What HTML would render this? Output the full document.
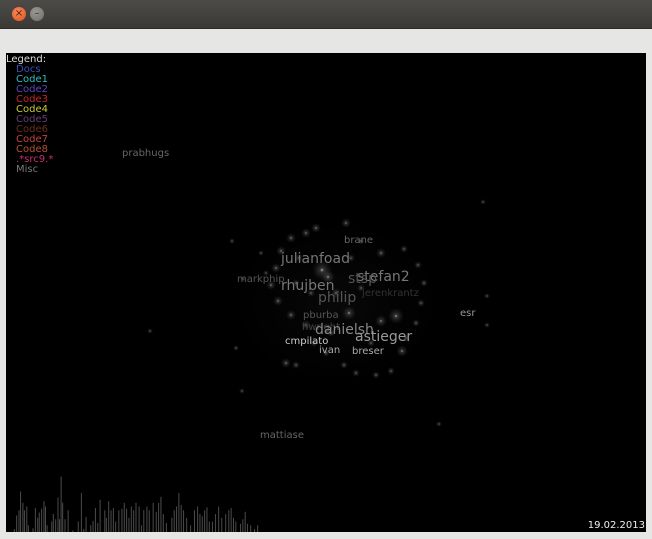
<!DOCTYPE html>
<html><head><meta charset="utf-8"><style>
html,body{margin:0;padding:0;width:652px;height:539px;overflow:hidden;background:#e6e6e4;font-family:"DejaVu Sans","Liberation Sans",sans-serif}
.title{position:absolute;left:0;top:0;width:652px;height:28px;background:linear-gradient(#4c4b47,#3a3936);border-bottom:1px solid #2a2a28}
.btn{position:absolute;top:7px;width:14px;height:14px;border-radius:50%;font-size:10px;line-height:14px;text-align:center}
.c{position:absolute;left:6px;top:53px;width:640px;height:479px;background:#000;overflow:hidden}
.t{position:absolute;white-space:nowrap;font-size:10px;line-height:10px}
</style></head><body>
<div class="title">
<div class="btn" style="left:12px;background:radial-gradient(circle at 40% 35%,#f88a5a,#e0501e);color:#4a1a08">×</div>
<div class="btn" style="left:30px;background:radial-gradient(circle at 40% 35%,#9a9994,#6e6d69);color:#333">–</div>
</div>
<div class="c">
<svg width="640" height="479" style="position:absolute;left:0;top:0">
<defs><radialGradient id="g"><stop offset="0" stop-color="#fff" stop-opacity=".7"/><stop offset=".2" stop-color="#bbb" stop-opacity=".25"/><stop offset="1" stop-color="#666" stop-opacity="0"/></radialGradient>
<radialGradient id="h"><stop offset="0" stop-color="#666" stop-opacity=".25"/><stop offset="1" stop-color="#333" stop-opacity="0"/></radialGradient></defs>
<ellipse cx="330" cy="250" rx="110" ry="85" fill="url(#h)" opacity=".35"/>
<g fill="url(#g)">
<circle cx="316" cy="217" r="10"/><circle cx="322" cy="224" r="7"/><circle cx="343" cy="260" r="7"/><circle cx="390" cy="263" r="8"/><circle cx="396" cy="298" r="6"/><circle cx="375" cy="268" r="6"/>
<circle cx="300" cy="180" r="5"/><circle cx="310" cy="175" r="5"/><circle cx="285" cy="185" r="5"/><circle cx="275" cy="198" r="5"/><circle cx="270" cy="215" r="5"/><circle cx="265" cy="232" r="5"/><circle cx="272" cy="248" r="5"/><circle cx="285" cy="262" r="5"/><circle cx="300" cy="272" r="5"/><circle cx="280" cy="310" r="5"/><circle cx="290" cy="312" r="4"/>
<circle cx="340" cy="170" r="5"/><circle cx="355" cy="188" r="4"/><circle cx="375" cy="200" r="5"/><circle cx="398" cy="196" r="4"/><circle cx="412" cy="212" r="4"/><circle cx="418" cy="230" r="4"/><circle cx="415" cy="250" r="4"/><circle cx="410" cy="270" r="4"/><circle cx="400" cy="285" r="4"/><circle cx="385" cy="318" r="4"/><circle cx="370" cy="322" r="4"/><circle cx="350" cy="320" r="4"/><circle cx="338" cy="312" r="4"/><circle cx="320" cy="300" r="4"/><circle cx="308" cy="290" r="4"/>
<circle cx="293" cy="205" r="4"/><circle cx="330" cy="240" r="5"/><circle cx="355" cy="235" r="4"/><circle cx="345" cy="205" r="4"/><circle cx="305" cy="240" r="4"/><circle cx="290" cy="230" r="4"/><circle cx="365" cy="290" r="4"/><circle cx="325" cy="280" r="4"/><circle cx="255" cy="200" r="3"/><circle cx="260" cy="220" r="3"/>
<circle cx="477" cy="149" r="3"/><circle cx="481" cy="243" r="3"/><circle cx="481" cy="272" r="3"/><circle cx="433" cy="371" r="3"/><circle cx="226" cy="188" r="3"/><circle cx="144" cy="278" r="3"/><circle cx="230" cy="295" r="3"/><circle cx="236" cy="338" r="3"/><circle cx="237" cy="226" r="3"/>
</g>
<g fill="#4a4a4a" transform="translate(0,479) scale(0.78,0.75) translate(0,-479)">
<rect x="10" y="475" width="1.3" height="4"/><rect x="13" y="457" width="1.3" height="22"/><rect x="16" y="450" width="1.3" height="29"/><rect x="18" y="425" width="1.3" height="54"/><rect x="21" y="440" width="1.3" height="39"/><rect x="23" y="450" width="1.3" height="29"/><rect x="26" y="445" width="1.3" height="34"/><rect x="28" y="470" width="1.3" height="9"/><rect x="34" y="474" width="1.3" height="5"/><rect x="37" y="447" width="1.3" height="32"/><rect x="40" y="460" width="1.3" height="19"/><rect x="42" y="453" width="1.3" height="26"/><rect x="45" y="448" width="1.3" height="31"/><rect x="48" y="438" width="1.3" height="41"/><rect x="50" y="445" width="1.3" height="34"/><rect x="52" y="470" width="1.3" height="9"/><rect x="58" y="465" width="1.3" height="14"/><rect x="60" y="455" width="1.3" height="24"/><rect x="63" y="462" width="1.3" height="17"/><rect x="66" y="433" width="1.3" height="46"/><rect x="68" y="462" width="1.3" height="17"/><rect x="70" y="405" width="1.3" height="74"/><rect x="72" y="440" width="1.3" height="39"/><rect x="75" y="462" width="1.3" height="17"/><rect x="79" y="450" width="1.3" height="29"/><rect x="85" y="477" width="1.3" height="2"/><rect x="92" y="465" width="1.3" height="14"/><rect x="96" y="427" width="1.3" height="52"/><rect x="99" y="475" width="1.3" height="4"/><rect x="102" y="459" width="1.3" height="20"/><rect x="108" y="470" width="1.3" height="9"/><rect x="111" y="464" width="1.3" height="15"/><rect x="114" y="447" width="1.3" height="32"/><rect x="117" y="467" width="1.3" height="12"/><rect x="120" y="436" width="1.3" height="43"/><rect x="126" y="450" width="1.3" height="29"/><rect x="128" y="460" width="1.3" height="19"/><rect x="131" y="438" width="1.3" height="41"/><rect x="134" y="450" width="1.3" height="29"/><rect x="137" y="447" width="1.3" height="32"/><rect x="140" y="465" width="1.3" height="14"/><rect x="144" y="450" width="1.3" height="29"/><rect x="148" y="448" width="1.3" height="31"/><rect x="151" y="440" width="1.3" height="39"/><rect x="154" y="448" width="1.3" height="31"/><rect x="157" y="460" width="1.3" height="19"/><rect x="160" y="445" width="1.3" height="34"/><rect x="163" y="450" width="1.3" height="29"/><rect x="166" y="440" width="1.3" height="39"/><rect x="170" y="445" width="1.3" height="34"/><rect x="173" y="470" width="1.3" height="9"/><rect x="176" y="450" width="1.3" height="29"/><rect x="180" y="445" width="1.3" height="34"/><rect x="183" y="450" width="1.3" height="29"/><rect x="188" y="440" width="1.3" height="39"/><rect x="192" y="452" width="1.3" height="27"/><rect x="195" y="440" width="1.3" height="39"/><rect x="198" y="432" width="1.3" height="47"/><rect x="201" y="455" width="1.3" height="24"/><rect x="205" y="467" width="1.3" height="12"/><rect x="212" y="460" width="1.3" height="19"/><rect x="215" y="450" width="1.3" height="29"/><rect x="218" y="445" width="1.3" height="34"/><rect x="221" y="427" width="1.3" height="52"/><rect x="224" y="443" width="1.3" height="36"/><rect x="227" y="450" width="1.3" height="29"/><rect x="231" y="460" width="1.3" height="19"/><rect x="236" y="470" width="1.3" height="9"/><rect x="241" y="450" width="1.3" height="29"/><rect x="245" y="445" width="1.3" height="34"/><rect x="248" y="455" width="1.3" height="24"/><rect x="251" y="458" width="1.3" height="21"/><rect x="254" y="450" width="1.3" height="29"/><rect x="257" y="446" width="1.3" height="33"/><rect x="260" y="465" width="1.3" height="14"/><rect x="264" y="465" width="1.3" height="14"/><rect x="268" y="455" width="1.3" height="24"/><rect x="272" y="445" width="1.3" height="34"/><rect x="276" y="460" width="1.3" height="19"/><rect x="281" y="455" width="1.3" height="24"/><rect x="285" y="450" width="1.3" height="29"/><rect x="288" y="447" width="1.3" height="32"/><rect x="291" y="460" width="1.3" height="19"/><rect x="294" y="465" width="1.3" height="14"/><rect x="300" y="468" width="1.3" height="11"/><rect x="303" y="462" width="1.3" height="17"/><rect x="306" y="452" width="1.3" height="27"/><rect x="309" y="468" width="1.3" height="11"/><rect x="313" y="470" width="1.3" height="9"/><rect x="318" y="475" width="1.3" height="4"/><rect x="322" y="470" width="1.3" height="9"/>
</g>
</svg>
<div class="t" style="left:0;top:2px;color:#ddd">Legend:</div>
<div class="t" style="left:10px;top:12px;color:#3a4fb8">Docs</div>
<div class="t" style="left:10px;top:22px;color:#2cc0c0">Code1</div>
<div class="t" style="left:10px;top:32px;color:#5b48c0">Code2</div>
<div class="t" style="left:10px;top:42px;color:#c82828">Code3</div>
<div class="t" style="left:10px;top:52px;color:#c8c830">Code4</div>
<div class="t" style="left:10px;top:62px;color:#6a3a7a">Code5</div>
<div class="t" style="left:10px;top:72px;color:#6a3018">Code6</div>
<div class="t" style="left:10px;top:82px;color:#c84040">Code7</div>
<div class="t" style="left:10px;top:92px;color:#b85030">Code8</div>
<div class="t" style="left:10px;top:102px;color:#c83070">.*src9.*</div>
<div class="t" style="left:10px;top:112px;color:#777">Misc</div>
<div class="t" style="left:116px;top:96px;color:#666">prabhugs</div>
<div class="t" style="left:338px;top:183px;color:#666">brane</div>
<div class="t" style="left:275px;top:199px;color:#777;font-size:14px;line-height:14px">julianfoad</div>
<div class="t" style="left:231px;top:222px;color:#555">markphip</div>
<div class="t" style="left:351px;top:217px;color:#777;font-size:14px;line-height:14px">stefan2</div>
<div class="t" style="left:342px;top:219px;color:#555;font-size:14px;line-height:14px">stsp</div>
<div class="t" style="left:275px;top:226px;color:#777;font-size:14px;line-height:14px">rhujben</div>
<div class="t" style="left:312px;top:238px;color:#555;font-size:14px;line-height:14px">philip</div>
<div class="t" style="left:356px;top:236px;color:#333">jerenkrantz</div>
<div class="t" style="left:297px;top:258px;color:#555">pburba</div>
<div class="t" style="left:296px;top:270px;color:#444">hwright</div>
<div class="t" style="left:309px;top:270px;color:#888;font-size:14px;line-height:14px">danielsh</div>
<div class="t" style="left:349px;top:277px;color:#999;font-size:14px;line-height:14px">astieger</div>
<div class="t" style="left:279px;top:284px;color:#ccc">cmpilato</div>
<div class="t" style="left:313px;top:293px;color:#aaa">ivan</div>
<div class="t" style="left:346px;top:294px;color:#aaa">breser</div>
<div class="t" style="left:454px;top:256px;color:#999">esr</div>
<div class="t" style="left:254px;top:378px;color:#666">mattiase</div>
<div class="t" style="right:1px;top:468px;color:#eee">19.02.2013</div>
</div>
</body></html>
